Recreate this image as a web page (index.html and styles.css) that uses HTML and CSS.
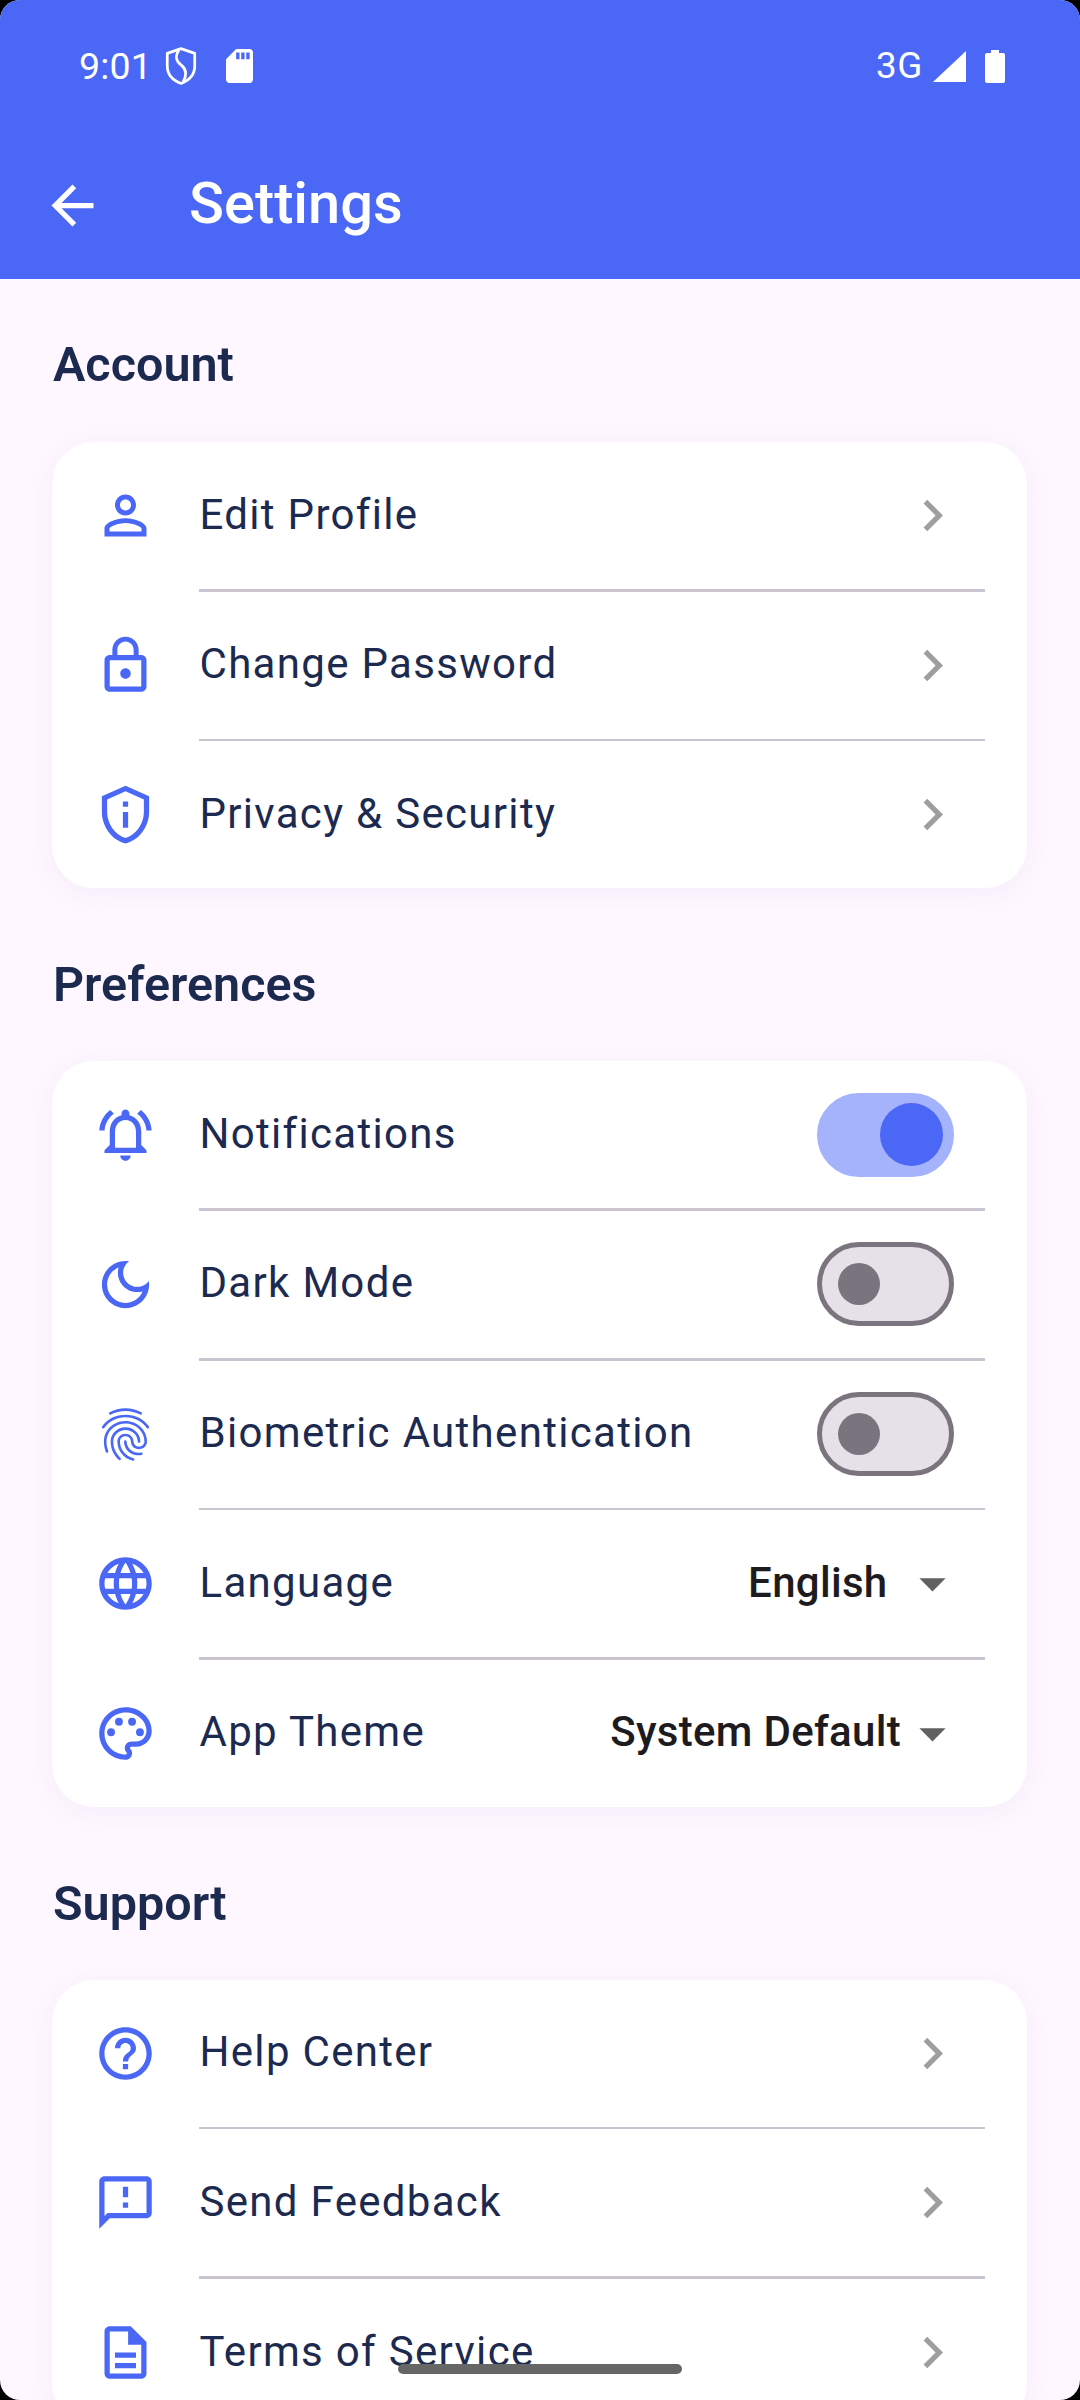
FILE: index.html
```html
<!DOCTYPE html>
<html lang="en">
<head>
<meta charset="utf-8">
<title>Settings</title>
<link rel="stylesheet" href="styles.css">
</head>
<body>
<div class="screen">
  <header class="appbar">
    <div class="statusbar">
      <div class="status-left">
        <span class="clock">9:01</span>
        <svg class="st-shield" viewBox="0 0 30 36"><path fill="none" stroke="#fff" stroke-width="2.6" stroke-linejoin="round" d="M15 1.500 28 6v12c0 8-5.500 13.700-13 16.500C7.500 31.700 2 26 2 18V6z"/><path fill="none" stroke="#fff" stroke-width="2.6" d="M13 3c-4 6-3 10 2 14 5 4 6 9 2 16"/></svg>
        <svg class="st-sd" viewBox="4 2 16 20" preserveAspectRatio="none"><path fill="#fff" d="M18 2h-8L4.020 8 4 20c0 1.100.9 2 2 2h12c1.100 0 2-.9 2-2V4c0-1.100-.9-2-2-2zm-6 6h-2V4h2v4zm3 0h-2V4h2v4zm3 0h-2V4h2v4z"/></svg>
      </div>
      <div class="status-right">
        <span class="net">3G</span>
        <svg class="st-signal" viewBox="0 0 33 31"><path fill="#fff" d="M0 31 33 0v31z"/></svg>
        <svg class="st-battery" viewBox="0 0 20 33"><path fill="#fff" d="M6 0h8v3h4a2 2 0 0 1 2 2v26a2 2 0 0 1-2 2H2a2 2 0 0 1-2-2V5a2 2 0 0 1 2-2h4z"/></svg>
      </div>
    </div>
    <div class="toolbar">
      <svg class="back" viewBox="0 0 24 24"><path d="M20 11H7.830l5.590-5.590L12 4l-8 8 8 8 1.410-1.410L7.830 13H20v-2z"/></svg>
      <h1 class="title">Settings</h1>
    </div>
  </header>

  <main class="content">
    <section class="section">
      <h2 class="section-title">Account</h2>
      <div class="card">
        <div class="row">
          <svg class="icon" viewBox="0 0 24 24"><path d="M12 5.900c1.160 0 2.100.94 2.100 2.100s-.94 2.100-2.100 2.100S9.900 9.160 9.900 8s.94-2.100 2.100-2.100m0 9c2.970 0 6.100 1.460 6.100 2.100v1.100H5.900V17c0-.64 3.130-2.100 6.100-2.100M12 4C9.790 4 8 5.790 8 8s1.790 4 4 4 4-1.790 4-4-1.790-4-4-4zm0 9c-2.670 0-8 1.340-8 4v3h16v-3c0-2.660-5.330-4-8-4z"/></svg>
          <span class="label">Edit Profile</span>
          <svg class="chevron" viewBox="0 0 24 24"><path d="M10 6 8.590 7.410 13.170 12l-4.580 4.590L10 18l6-6z"/></svg>
        </div>
        <div class="divider"></div>
        <div class="row">
          <svg class="icon" viewBox="0 0 24 24"><path d="M12 17c1.100 0 2-.9 2-2s-.9-2-2-2-2 .9-2 2 .9 2 2 2zm6-9h-1V6c0-2.760-2.240-5-5-5S7 3.240 7 6v2H6c-1.100 0-2 .9-2 2v10c0 1.100.9 2 2 2h12c1.100 0 2-.9 2-2V10c0-1.100-.9-2-2-2zM8.900 6c0-1.710 1.390-3.100 3.100-3.100s3.100 1.390 3.100 3.100v2H8.900V6zM18 20H6V10h12v10z"/></svg>
          <span class="label">Change Password</span>
          <svg class="chevron" viewBox="0 0 24 24"><path d="M10 6 8.590 7.410 13.170 12l-4.580 4.590L10 18l6-6z"/></svg>
        </div>
        <div class="divider"></div>
        <div class="row">
          <svg class="icon" viewBox="0 0 24 24"><path d="M12 3.190l7 3.110V11c0 4.520-2.980 8.690-7 9.930-4.020-1.240-7-5.410-7-9.930V6.300l7-3.110M12 1 3 5v6c0 5.550 3.840 10.740 9 12 5.160-1.260 9-6.450 9-12V5l-9-4zm-1 6h2v2h-2zm0 4h2v6h-2z"/></svg>
          <span class="label">Privacy &amp; Security</span>
          <svg class="chevron" viewBox="0 0 24 24"><path d="M10 6 8.590 7.410 13.170 12l-4.580 4.590L10 18l6-6z"/></svg>
        </div>
      </div>
    </section>

    <section class="section">
      <h2 class="section-title">Preferences</h2>
      <div class="card">
        <div class="row">
          <svg class="icon" viewBox="0 0 24 24"><path d="M7.580 4.080 6.150 2.650C3.750 4.480 2.170 7.300 2.030 10.500h2c.15-2.650 1.510-4.970 3.550-6.420zm12.390 6.420h2c-.15-3.200-1.730-6.020-4.120-7.850l-1.420 1.430c2.020 1.450 3.390 3.770 3.540 6.420zM18 11c0-3.070-1.640-5.640-4.500-6.320V4c0-.83-.67-1.500-1.500-1.500s-1.500.67-1.500 1.500v.68C7.630 5.360 6 7.920 6 11v5l-2 2v1h16v-1l-2-2v-5zm-2 6H8v-6c0-2.480 1.510-4.500 4-4.500s4 2.020 4 4.500v6zm-4 5c.14 0 .27-.01.4-.04.65-.14 1.180-.58 1.440-1.180.1-.24.15-.5.15-.78h-4c.01 1.100.9 2 2.010 2z"/></svg>
          <span class="label">Notifications</span>
          <div class="switch switch-on"><span class="thumb"></span></div>
        </div>
        <div class="divider"></div>
        <div class="row">
          <svg class="icon" viewBox="0 0 24 24"><path d="M9.370 5.510C9.190 6.150 9.100 6.820 9.100 7.500c0 4.080 3.320 7.400 7.400 7.400.68 0 1.350-.09 1.990-.27C17.450 17.190 14.930 19 12 19c-3.860 0-7-3.140-7-7 0-2.930 1.810-5.450 4.370-6.490zM12 3c-4.970 0-9 4.030-9 9s4.030 9 9 9 9-4.030 9-9c0-.46-.04-.92-.1-1.360-.98 1.370-2.580 2.260-4.400 2.260-2.980 0-5.400-2.420-5.400-5.400 0-1.810.89-3.420 2.260-4.400-.44-.06-.9-.1-1.360-.1z"/></svg>
          <span class="label">Dark Mode</span>
          <div class="switch"><span class="thumb"></span></div>
        </div>
        <div class="divider"></div>
        <div class="row">
          <svg class="icon" viewBox="0 0 24 24"><path d="M17.810 4.470c-.08 0-.16-.02-.23-.06C15.660 3.420 14 3 12.010 3c-1.980 0-3.860.47-5.570 1.410-.24.13-.54.04-.68-.2-.13-.24-.04-.55.2-.68C7.820 2.520 9.860 2 12.010 2c2.130 0 3.990.47 6.030 1.520.25.13.34.43.21.67-.09.18-.26.28-.44.28zM3.500 9.720c-.1 0-.2-.03-.29-.09-.23-.16-.28-.47-.12-.7.99-1.400 2.250-2.500 3.750-3.270C9.980 4.040 14 4.030 17.150 5.650c1.500.77 2.760 1.860 3.750 3.250.16.22.11.54-.12.7-.23.16-.54.11-.7-.12-.9-1.260-2.040-2.250-3.390-2.940-2.870-1.470-6.540-1.470-9.400.01-1.360.7-2.500 1.700-3.400 2.960-.08.14-.23.21-.39.21zm6.250 12.070c-.13 0-.26-.05-.35-.15-.87-.87-1.340-1.430-2.010-2.640-.69-1.230-1.050-2.730-1.050-4.340 0-2.970 2.540-5.390 5.660-5.390s5.660 2.420 5.660 5.390c0 .28-.22.5-.5.5s-.5-.22-.5-.5c0-2.420-2.090-4.390-4.660-4.390-2.570 0-4.660 1.970-4.660 4.390 0 1.440.32 2.770.93 3.850.64 1.150 1.080 1.640 1.850 2.420.19.2.19.51 0 .71-.11.1-.24.15-.37.15zm7.170-1.850c-1.190 0-2.240-.3-3.100-.89-1.490-1.010-2.380-2.650-2.380-4.390 0-.28.22-.5.5-.5s.5.22.5.5c0 1.410.72 2.740 1.940 3.560.71.48 1.540.71 2.540.71.24 0 .64-.03 1.040-.1.27-.05.53.13.58.41.05.27-.13.53-.41.58-.57.11-1.070.12-1.210.12zM14.910 22c-.04 0-.09-.01-.13-.02-1.590-.44-2.630-1.030-3.720-2.100-1.400-1.390-2.170-3.240-2.170-5.220 0-1.620 1.380-2.940 3.080-2.940 1.700 0 3.080 1.320 3.080 2.940 0 1.070.93 1.940 2.080 1.940s2.080-.87 2.080-1.940c0-3.770-3.250-6.830-7.250-6.830-2.840 0-5.440 1.580-6.610 4.030-.39.81-.59 1.760-.59 2.800 0 .78.07 2.010.67 3.610.1.26-.03.55-.29.64-.26.1-.55-.04-.64-.29-.49-1.310-.73-2.610-.73-3.960 0-1.200.23-2.290.68-3.240 1.330-2.790 4.280-4.600 7.510-4.600 4.550 0 8.250 3.510 8.250 7.830 0 1.620-1.380 2.940-3.080 2.940s-3.080-1.320-3.080-2.940c0-1.070-.93-1.940-2.080-1.940s-2.080.87-2.080 1.940c0 1.710.66 3.310 1.870 4.510.95.94 1.860 1.460 3.270 1.850.27.07.42.35.35.61-.05.23-.26.38-.47.38z"/></svg>
          <span class="label">Biometric Authentication</span>
          <div class="switch"><span class="thumb"></span></div>
        </div>
        <div class="divider"></div>
        <div class="row">
          <svg class="icon" viewBox="0 0 24 24"><path d="M11.990 2C6.470 2 2 6.480 2 12s4.470 10 9.990 10C17.520 22 22 17.520 22 12S17.520 2 11.990 2zm6.930 6h-2.950c-.32-1.250-.78-2.450-1.380-3.560 1.840.63 3.370 1.910 4.330 3.560zM12 4.040c.83 1.200 1.480 2.530 1.910 3.960h-3.820c.43-1.430 1.080-2.760 1.910-3.960zM4.260 14C4.100 13.360 4 12.690 4 12s.1-1.360.26-2h3.380c-.08.66-.14 1.320-.14 2 0 .68.06 1.340.14 2H4.260zm.82 2h2.950c.32 1.250.78 2.450 1.380 3.560-1.840-.63-3.370-1.900-4.330-3.560zm2.950-8H5.080c.96-1.660 2.490-2.930 4.330-3.560C8.810 5.550 8.350 6.750 8.030 8zM12 19.960c-.83-1.200-1.480-2.530-1.910-3.960h3.820c-.43 1.430-1.080 2.760-1.910 3.960zM14.340 14H9.660c-.09-.66-.16-1.320-.16-2 0-.68.07-1.350.16-2h4.680c.09.65.16 1.320.16 2 0 .68-.07 1.340-.16 2zm.25 5.560c.6-1.110 1.060-2.310 1.380-3.560h2.950c-.96 1.650-2.490 2.930-4.330 3.560zM16.360 14c.08-.66.14-1.320.14-2 0-.68-.06-1.340-.14-2h3.380c.16.64.26 1.310.26 2s-.1 1.360-.26 2h-3.380z"/></svg>
          <span class="label">Language</span>
          <span class="value value-short">English</span>
          <svg class="caret" viewBox="0 0 24 24"><path d="M7 10l5 5 5-5z"/></svg>
        </div>
        <div class="divider"></div>
        <div class="row">
          <svg class="icon" viewBox="0 0 24 24"><path d="M12 22C6.490 22 2 17.510 2 12S6.490 2 12 2s10 4.040 10 9c0 3.310-2.690 6-6 6h-1.770c-.28 0-.5.22-.5.5 0 .12.05.23.13.33.41.47.64 1.060.64 1.670 0 1.380-1.120 2.500-2.500 2.500zm0-18c-4.410 0-8 3.590-8 8s3.590 8 8 8c.28 0 .5-.22.5-.5 0-.16-.08-.28-.14-.35-.41-.46-.63-1.050-.63-1.650 0-1.380 1.120-2.500 2.500-2.500H16c2.210 0 4-1.790 4-4 0-3.860-3.590-7-8-7z"/><circle cx="6.500" cy="11.500" r="1.500"/><circle cx="9.500" cy="7.500" r="1.500"/><circle cx="14.500" cy="7.500" r="1.500"/><circle cx="17.500" cy="11.500" r="1.500"/></svg>
          <span class="label">App Theme</span>
          <span class="value">System Default</span>
          <svg class="caret" viewBox="0 0 24 24"><path d="M7 10l5 5 5-5z"/></svg>
        </div>
      </div>
    </section>

    <section class="section">
      <h2 class="section-title">Support</h2>
      <div class="card">
        <div class="row">
          <svg class="icon" viewBox="0 0 24 24"><path d="M11 18h2v-2h-2v2zm1-16C6.480 2 2 6.480 2 12s4.480 10 10 10 10-4.480 10-10S17.520 2 12 2zm0 18c-4.410 0-8-3.590-8-8s3.590-8 8-8 8 3.590 8 8-3.590 8-8 8zm0-14c-2.210 0-4 1.790-4 4h2c0-1.100.9-2 2-2s2 .9 2 2c0 2-3 1.750-3 5h2c0-2.250 3-2.500 3-5 0-2.210-1.790-4-4-4z"/></svg>
          <span class="label">Help Center</span>
          <svg class="chevron" viewBox="0 0 24 24"><path d="M10 6 8.590 7.410 13.170 12l-4.580 4.590L10 18l6-6z"/></svg>
        </div>
        <div class="divider"></div>
        <div class="row">
          <svg class="icon" viewBox="0 0 24 24"><path d="M20 2H4c-1.100 0-1.990.9-1.990 2L2 22l4-4h14c1.100 0 2-.9 2-2V4c0-1.100-.9-2-2-2zm0 14H5.170L4 17.170V4h16v12zm-9-4h2v2h-2zm0-6h2v4h-2z"/></svg>
          <span class="label">Send Feedback</span>
          <svg class="chevron" viewBox="0 0 24 24"><path d="M10 6 8.590 7.410 13.170 12l-4.580 4.590L10 18l6-6z"/></svg>
        </div>
        <div class="divider"></div>
        <div class="row">
          <svg class="icon" viewBox="0 0 24 24"><path d="M8 16h8v2H8zm0-4h8v2H8zm6-10H6c-1.100 0-2 .9-2 2v16c0 1.100.89 2 1.990 2H18c1.100 0 2-.9 2-2V8l-6-6zm4 18H6V4h7v5h5v11z"/></svg>
          <span class="label">Terms of Service</span>
          <svg class="chevron" viewBox="0 0 24 24"><path d="M10 6 8.590 7.410 13.170 12l-4.580 4.590L10 18l6-6z"/></svg>
        </div>
      </div>
    </section>
  </main>
  <div class="gesture"></div>
</div>
</body>
</html>
```
FILE: styles.css
```css
* { box-sizing: border-box; }
html, body { margin: 0; padding: 0; background: #000; }
body { font-family: Roboto, "Noto Sans", sans-serif; }

.screen {
  position: relative;
  width: 1080px;
  height: 2400px;
  overflow: hidden;
  background: #fef7ff;
  border-radius: 20px;
}

.appbar { height: 279px; background: #4a67f6; color: #fff; }

.statusbar {
  height: 132px;
  padding: 0 75px 0 79px;
  display: flex;
  justify-content: space-between;
  align-items: flex-start;
}
.status-left, .status-right { display: flex; align-items: center; height: 36px; margin-top: 48px; }
.clock { font-size: 37.5px; font-weight: 400; line-height: 36px; letter-spacing: 0.2px; }
.st-shield { width: 32px; height: 38px; margin-left: 12.5px; }
.st-sd { width: 27px; height: 34px; margin-left: 29px; }
.net { font-size: 36.75px; font-weight: 400; line-height: 36px; letter-spacing: 0.6px; }
.st-signal { width: 33px; height: 31px; margin-left: 10px; }
.st-battery { width: 20px; height: 33px; margin-left: 19px; }

.toolbar { height: 147px; display: flex; align-items: center; padding-left: 41px; }
.back { width: 63px; height: 63px; fill: #fff; flex: none; }
.title { margin: 0 0 0 85px; padding-bottom: 4px; font-size: 57.75px; font-weight: 500; line-height: 63px; }

.content { display: block; }
.section { padding: 0 53px 0 52px; margin-top: 70px; }
.section:first-child { margin-top: 59px; }
.section-title {
  margin: 0 0 50px;
  padding-left: 1px;
  font-size: 48.5px;
  font-weight: 600;
  line-height: 54px;
  color: #1c2a4f;
}
.section + .section .section-title { margin-bottom: 49px; }

.card {
  background: #fff;
  border-radius: 42px;
  box-shadow: 0 5px 26px rgba(90, 40, 130, 0.05);
}
.row { height: 147px; padding: 0 42px; display: flex; align-items: center; }
.icon { width: 63px; height: 63px; fill: #4a67f6; flex: none; margin-right: 42px; }
.label {
  flex: 1;
  font-size: 42px;
  letter-spacing: 1.31px;
  color: #1c2a4f;
  white-space: nowrap;
  padding-bottom: 3px;
  padding-left: 0.5px;
}
.divider { height: 2.625px; margin: 0 42px 0 147px; background: #cac4d0; }
.chevron { width: 63px; height: 63px; fill: #9e9e9e; flex: none; margin-right: 21px; }
.caret { width: 63px; height: 63px; fill: #616161; flex: none; margin-right: 21px; }
.value { font-size: 42px; font-weight: 500; letter-spacing: 0.3px; color: #1d1b20; white-space: nowrap; padding-bottom: 3px; }
.value-short { margin-right: 13.5px; }

.switch {
  position: relative;
  flex: none;
  width: 136.5px;
  height: 84px;
  margin-right: 31.5px;
  border-radius: 42px;
  background: #e6e0e9;
  border: 5.25px solid #79747e;
}
.switch .thumb {
  position: absolute;
  left: 15.75px;
  top: 15.75px;
  width: 42px;
  height: 42px;
  border-radius: 50%;
  background: #79747e;
}
.switch-on { background: #a4b3fb; border-color: #a4b3fb; }
.switch-on .thumb {
  top: 5.25px;
  left: 58px;
  width: 63px;
  height: 63px;
  background: #4a67f6;
}

.gesture {
  position: absolute;
  left: 398px;
  top: 2364px;
  width: 284px;
  height: 10px;
  border-radius: 5px;
  background: #666;
}
```
